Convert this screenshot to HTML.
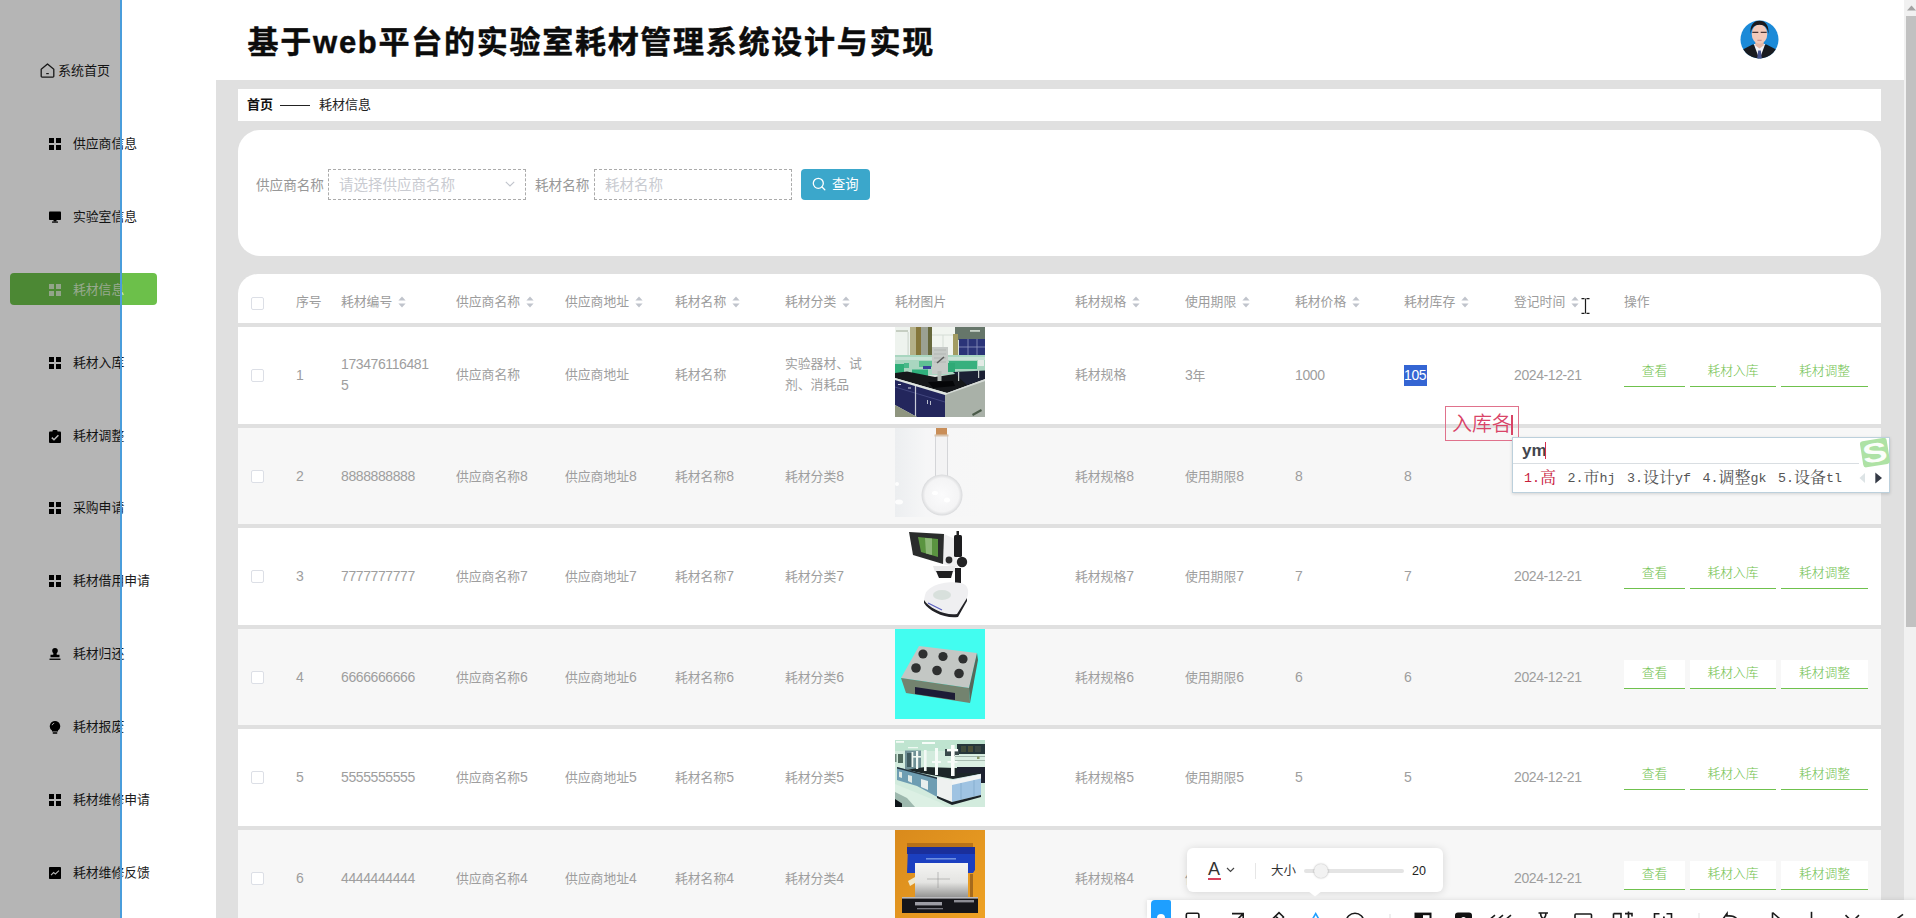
<!DOCTYPE html>
<html lang="zh-CN"><head><meta charset="utf-8"><title>基于web平台的实验室耗材管理系统设计与实现</title>
<style>
*{box-sizing:border-box;margin:0;padding:0}
html,body{width:1916px;height:918px;overflow:hidden;background:#e0e0e0;}
body{position:relative;font-family:"Liberation Sans","Noto Sans CJK SC",sans-serif;font-size:13px;color:#222;}
.abs{position:absolute}
#side{left:0;top:0;width:216px;height:918px;background:#fff}
#head{left:216px;top:0;width:1688px;height:80px;background:#fff}
#title{left:247.6px;top:18.8px;font-size:31px;font-weight:700;line-height:48px;white-space:nowrap;letter-spacing:1.73px;-webkit-text-stroke:0.45px #0c0c0c;color:#0c0c0c}
.mi{left:0;width:216px;height:32px;line-height:32px;font-size:12.8px;color:#1c1c1c;white-space:nowrap}
.mi .t{position:absolute;left:73px;top:0}
.mi svg{position:absolute;left:49px;top:10px}
#crumb{left:238px;top:89px;width:1643px;height:32px;background:#fff;line-height:32px;font-size:13px;color:#222;white-space:nowrap}
#search{left:238px;top:130px;width:1643px;height:126px;background:#fff;border-radius:22px}
#tbl{left:238px;top:274px;width:1643px;height:660px;background:#e0e0e0;border-radius:20px 20px 0 0;overflow:hidden}
.row{position:absolute;left:0;width:1643px}
.c{position:absolute;white-space:nowrap;font-size:12.8px;line-height:20px;color:#9e9e9e;font-weight:400}
.h{position:absolute;white-space:nowrap;font-size:12.8px;line-height:20px;color:#9c9c9c;top:18px;font-weight:400}
.cb{position:absolute;left:13px;width:13px;height:13px;border:1px solid #dcdfe6;border-radius:2px;background:#fff}
.btn{position:absolute;height:29px;line-height:26px;text-align:center;color:#6fc14d;font-size:12.8px;border-bottom:1px solid #6fc14d;background:#fff;font-weight:300}
.caret{position:absolute;top:22px}
.n{font-size:14px;letter-spacing:-0.4px}
#cand .l{font-size:13.33px;letter-spacing:0}
#cand .g{margin-left:11.5px}
#cand .k{position:relative;top:1.6px}
.lbl{position:absolute;font-size:13.6px;color:#989898;line-height:31px;top:40px;white-space:nowrap;font-weight:400}
.inp{position:absolute;top:39px;height:31px;border:1px dashed #ababab;line-height:31px;font-size:14.5px;color:#c9cbd1;padding-left:10px;white-space:nowrap;font-weight:400}
</style></head><body>
<div id="side" class="abs">
<div class="abs" style="left:40px;top:63px;width:16px;height:16px"><svg width="15" height="15" viewBox="0 0 15 15"><path d="M1.2 6.2 L7.5 0.9 L13.8 6.2 V13.2 a0.9 0.9 0 0 1 -0.9 0.9 H2.1 a0.9 0.9 0 0 1 -0.9 -0.9 Z" fill="none" stroke="#222" stroke-width="1.3" stroke-linejoin="round"/><path d="M6.2 10.6 h2.6" stroke="#222" stroke-width="1.2"/></svg></div>
<div class="abs" style="left:58px;top:55px;line-height:32px;font-size:13px;color:#1c1c1c;white-space:nowrap">系统首页</div>
<div class="abs mi" style="top:128px"><svg width="12" height="12" viewBox="0 0 12 12"><rect x="0" y="0" width="5" height="5" fill="#000"/><rect x="7" y="0" width="5" height="5" fill="#000"/><rect x="0" y="7" width="5" height="5" fill="#000"/><rect x="7" y="7" width="5" height="5" fill="#000"/></svg><span class="t">供应商信息</span></div>
<div class="abs mi" style="top:201px"><svg width="12" height="12" viewBox="0 0 12 12"><rect x="0" y="0.5" width="12" height="8.5" rx="0.8" fill="#000"/><rect x="4.5" y="9" width="3" height="1.5" fill="#000"/><rect x="3" y="10.5" width="6" height="1.2" fill="#000"/></svg><span class="t">实验室信息</span></div>
<div class="abs" style="left:10px;top:273px;width:147px;height:32px;background:#6cc04a;border-radius:4px"></div>
<div class="abs mi" style="top:274px;color:#d6efca"><svg width="12" height="12" viewBox="0 0 12 12"><rect x="0" y="0" width="5" height="5" fill="#cfe9c3"/><rect x="7" y="0" width="5" height="5" fill="#cfe9c3"/><rect x="0" y="7" width="5" height="5" fill="#cfe9c3"/><rect x="7" y="7" width="5" height="5" fill="#cfe9c3"/></svg><span class="t">耗材信息</span></div>
<div class="abs mi" style="top:347px"><svg width="12" height="12" viewBox="0 0 12 12"><rect x="0" y="0" width="5" height="5" fill="#000"/><rect x="7" y="0" width="5" height="5" fill="#000"/><rect x="0" y="7" width="5" height="5" fill="#000"/><rect x="7" y="7" width="5" height="5" fill="#000"/></svg><span class="t">耗材入库</span></div>
<div class="abs mi" style="top:420px"><svg width="12" height="13" viewBox="0 0 12 13"><rect x="0" y="1.5" width="12" height="11.5" rx="1" fill="#000"/><rect x="3.5" y="0" width="5" height="3" rx="1" fill="#000"/><path d="M2.8 7.6 L5 9.8 L9.4 5.2" stroke="#fff" stroke-width="1.5" fill="none"/></svg><span class="t">耗材调整</span></div>
<div class="abs mi" style="top:492px"><svg width="12" height="12" viewBox="0 0 12 12"><rect x="0" y="0" width="5" height="5" fill="#000"/><rect x="7" y="0" width="5" height="5" fill="#000"/><rect x="0" y="7" width="5" height="5" fill="#000"/><rect x="7" y="7" width="5" height="5" fill="#000"/></svg><span class="t">采购申请</span></div>
<div class="abs mi" style="top:565px"><svg width="12" height="12" viewBox="0 0 12 12"><rect x="0" y="0" width="5" height="5" fill="#000"/><rect x="7" y="0" width="5" height="5" fill="#000"/><rect x="0" y="7" width="5" height="5" fill="#000"/><rect x="7" y="7" width="5" height="5" fill="#000"/></svg><span class="t">耗材借用申请</span></div>
<div class="abs mi" style="top:638px"><svg width="12" height="12" viewBox="0 0 12 12"><circle cx="6" cy="2.8" r="2.8" fill="#000"/><path d="M4.6 4.5 h2.8 l0.4 2.3 h2.7 v2.4 h-9 v-2.4 h2.7 z" fill="#000"/><rect x="0.5" y="10.6" width="11" height="1.3" fill="#000"/></svg><span class="t">耗材归还</span></div>
<div class="abs mi" style="top:711px"><svg width="12" height="13" viewBox="0 0 12 13"><path d="M6 0 a5.3 5.3 0 0 1 3 9.6 v1 h-6 v-1 a5.3 5.3 0 0 1 3 -9.6z" fill="#000"/><rect x="3.6" y="11.3" width="4.8" height="1.4" rx="0.6" fill="#000"/><path d="M3 4.2 a3.2 3.2 0 0 1 2.2 -2" stroke="#fff" stroke-width="0.9" fill="none"/></svg><span class="t">耗材报废</span></div>
<div class="abs mi" style="top:784px"><svg width="12" height="12" viewBox="0 0 12 12"><rect x="0" y="0" width="5" height="5" fill="#000"/><rect x="7" y="0" width="5" height="5" fill="#000"/><rect x="0" y="7" width="5" height="5" fill="#000"/><rect x="7" y="7" width="5" height="5" fill="#000"/></svg><span class="t">耗材维修申请</span></div>
<div class="abs mi" style="top:857px"><svg width="12" height="12" viewBox="0 0 12 12"><rect x="0" y="0" width="12" height="12" rx="0.8" fill="#000"/><path d="M2 8.2 L4.6 5.6 L6.4 7 L10 3.6" stroke="#fff" stroke-width="1.1" fill="none"/></svg><span class="t">耗材维修反馈</span></div>
</div>
<div id="head" class="abs"></div>
<div id="title" class="abs">基于web平台的实验室耗材管理系统设计与实现</div>
<div class="abs" style="left:1740px;top:20px;width:39px;height:39px"><svg width="39" height="39" viewBox="0 0 39 39"><defs><clipPath id="av"><circle cx="19.5" cy="19.5" r="19"/></clipPath></defs><g clip-path="url(#av)"><rect width="39" height="39" fill="#1b8ad8"/><path d="M-1 39 V31.5 L12.5 24.5 H26.5 L40 31.5 V39Z" fill="#191b20"/><path d="M13.8 24 L19.5 39.5 L25.2 24Z" fill="#f3f3f7"/><path d="M18.2 30.5 h2.6 l1.2 9 h-5z" fill="#46548f"/><path d="M15.3 19 h8.4 v6.5 l-4.2 3 l-4.2 -3z" fill="#e6b7a4"/><ellipse cx="19.5" cy="14" rx="7.8" ry="9.8" fill="#f1c9ba"/><path d="M10.7 14 C8 -4 31 -4 28.3 14 C28 8 24.5 4.8 19.5 4.8 C14.5 4.8 11 8 10.7 14Z" fill="#1a1a1e"/><path d="M12.3 12.4 h6 M20.7 12.4 h6" stroke="#4a3534" stroke-width="1.3"/><path d="M17.4 20.3 h4.2" stroke="#c97f78" stroke-width="0.9"/></g></svg></div>
<div id="crumb" class="abs"><span class="abs" style="left:9px;font-weight:700;color:#111">首页</span><span class="abs" style="left:42px;top:15.5px;width:30px;height:1px;background:#222"></span><span class="abs" style="left:81px;color:#222">耗材信息</span></div>
<div id="search" class="abs">
<span class="lbl" style="left:18px">供应商名称</span>
<div class="inp" style="left:90px;width:198px">请选择供应商名称<svg class="abs" style="right:10px;top:11px" width="10" height="6" viewBox="0 0 10 6"><path d="M0.8 0.8 L5 5 L9.2 0.8" fill="none" stroke="#c0c4cc" stroke-width="1.1"/></svg></div>
<span class="lbl" style="left:297px">耗材名称</span>
<div class="inp" style="left:356px;width:198px">耗材名称</div>
<div class="abs" style="left:563px;top:39px;width:69px;height:31px;border-radius:4px;background:#3ba7cb;color:#fff;font-size:13.3px;line-height:31px;white-space:nowrap"><svg class="abs" style="left:11px;top:8px" width="14" height="14" viewBox="0 0 14 14"><circle cx="6.3" cy="6.3" r="5" fill="none" stroke="#fff" stroke-width="1.3"/><path d="M10 10 L12.8 12.8" stroke="#fff" stroke-width="1.3" stroke-linecap="round"/></svg><span class="abs" style="left:31px">查询</span></div>
</div>
<div id="tbl" class="abs">
<div class="row" style="top:0;height:49px;background:#fff">
<span class="cb" style="top:23px"></span>
<span class="h" style="left:58px">序号</span>
<span class="h" style="left:103px">耗材编号</span>
<svg class="caret" style="left:159.7px" width="8" height="12" viewBox="0 0 8 12"><path d="M4 0.6 L7.6 4.6 H0.4Z" fill="#c0c4cc"/><path d="M4 11.4 L7.6 7.4 H0.4Z" fill="#c0c4cc"/></svg>
<span class="h" style="left:218px">供应商名称</span>
<svg class="caret" style="left:287.5px" width="8" height="12" viewBox="0 0 8 12"><path d="M4 0.6 L7.6 4.6 H0.4Z" fill="#c0c4cc"/><path d="M4 11.4 L7.6 7.4 H0.4Z" fill="#c0c4cc"/></svg>
<span class="h" style="left:327px">供应商地址</span>
<svg class="caret" style="left:396.5px" width="8" height="12" viewBox="0 0 8 12"><path d="M4 0.6 L7.6 4.6 H0.4Z" fill="#c0c4cc"/><path d="M4 11.4 L7.6 7.4 H0.4Z" fill="#c0c4cc"/></svg>
<span class="h" style="left:437px">耗材名称</span>
<svg class="caret" style="left:493.7px" width="8" height="12" viewBox="0 0 8 12"><path d="M4 0.6 L7.6 4.6 H0.4Z" fill="#c0c4cc"/><path d="M4 11.4 L7.6 7.4 H0.4Z" fill="#c0c4cc"/></svg>
<span class="h" style="left:547px">耗材分类</span>
<svg class="caret" style="left:603.7px" width="8" height="12" viewBox="0 0 8 12"><path d="M4 0.6 L7.6 4.6 H0.4Z" fill="#c0c4cc"/><path d="M4 11.4 L7.6 7.4 H0.4Z" fill="#c0c4cc"/></svg>
<span class="h" style="left:657px">耗材图片</span>
<span class="h" style="left:837px">耗材规格</span>
<svg class="caret" style="left:893.7px" width="8" height="12" viewBox="0 0 8 12"><path d="M4 0.6 L7.6 4.6 H0.4Z" fill="#c0c4cc"/><path d="M4 11.4 L7.6 7.4 H0.4Z" fill="#c0c4cc"/></svg>
<span class="h" style="left:947px">使用期限</span>
<svg class="caret" style="left:1003.7px" width="8" height="12" viewBox="0 0 8 12"><path d="M4 0.6 L7.6 4.6 H0.4Z" fill="#c0c4cc"/><path d="M4 11.4 L7.6 7.4 H0.4Z" fill="#c0c4cc"/></svg>
<span class="h" style="left:1057px">耗材价格</span>
<svg class="caret" style="left:1113.7px" width="8" height="12" viewBox="0 0 8 12"><path d="M4 0.6 L7.6 4.6 H0.4Z" fill="#c0c4cc"/><path d="M4 11.4 L7.6 7.4 H0.4Z" fill="#c0c4cc"/></svg>
<span class="h" style="left:1166px">耗材库存</span>
<svg class="caret" style="left:1222.7px" width="8" height="12" viewBox="0 0 8 12"><path d="M4 0.6 L7.6 4.6 H0.4Z" fill="#c0c4cc"/><path d="M4 11.4 L7.6 7.4 H0.4Z" fill="#c0c4cc"/></svg>
<span class="h" style="left:1276px">登记时间</span>
<svg class="caret" style="left:1332.7px" width="8" height="12" viewBox="0 0 8 12"><path d="M4 0.6 L7.6 4.6 H0.4Z" fill="#c0c4cc"/><path d="M4 11.4 L7.6 7.4 H0.4Z" fill="#c0c4cc"/></svg>
<span class="h" style="left:1386px">操作</span>
</div>
<div class="row" style="top:53px;height:97px;background:#fff">
<span class="cb" style="top:42px"></span>
<span class="c" style="left:58px;top:37.7px;"><span class="n">1</span></span>
<span class="c" style="left:103px;top:26.7px;"><span class="n">173476116481</span></span><span class="c" style="left:103px;top:47.7px;"><span class="n">5</span></span>
<span class="c" style="left:218px;top:37.7px;">供应商名称</span>
<span class="c" style="left:327px;top:37.7px;">供应商地址</span>
<span class="c" style="left:437px;top:37.7px;">耗材名称</span>
<span class="c" style="left:547px;top:26.7px;">实验器材、试</span><span class="c" style="left:547px;top:47.7px;">剂、消耗品</span>
<svg class="abs" style="left:657px;top:0;filter:blur(0.45px)" width="90" height="90" viewBox="0 0 90 90">
<rect width="90" height="90" fill="#dfe8e2"/>
<rect x="0" y="0" width="15" height="30" fill="#eef3ee"/><rect x="1" y="3" width="12" height="2" fill="#c6cec2"/><rect x="12.5" y="5" width="1.2" height="24" fill="#cfd8cf"/>
<rect x="15" y="0" width="6" height="31" fill="#b4b088"/><rect x="21" y="0" width="5" height="31" fill="#85763a"/><rect x="26" y="0" width="7" height="31" fill="#9ba192"/><rect x="33" y="0" width="4" height="31" fill="#66683c"/>
<rect x="37" y="0" width="23" height="30" fill="#f1f5f0"/><rect x="37" y="7.5" width="22" height="1" fill="#d5ddd5"/><rect x="47.5" y="8" width="1" height="14" fill="#d5ddd5"/>
<rect x="60" y="0" width="30" height="13" fill="#66766a"/><rect x="75" y="3" width="10" height="1.8" fill="#c9d3c9"/>
<rect x="58" y="7" width="5" height="22" fill="#a29c62"/>
<rect x="64" y="12" width="26" height="17" fill="#2b3478"/>
<path d="M73 12v17M82 12v17M64 20h26" stroke="#8f98c0" stroke-width="0.8"/>
<rect x="0" y="28" width="90" height="20" fill="#a9d6c0"/>
<rect x="0" y="30" width="90" height="3" fill="#c9e2d6"/>
<rect x="0" y="37" width="9" height="9" fill="#2fae78"/><rect x="9" y="36" width="5" height="5" fill="#49b98a"/><rect x="17" y="42.5" width="16" height="8" fill="#2fb07c"/><rect x="54" y="34" width="28" height="8" fill="#38b07e"/><rect x="24" y="34" width="13" height="6" fill="#5fc094"/><rect x="52" y="36" width="8" height="9" fill="#2faa76"/>
<rect x="28" y="39" width="8" height="3" fill="#39409a"/>
<rect x="83" y="33" width="6" height="6" fill="#e3ebe6"/>
<path d="M0 46 L12 44.5 L40 50 L60 47 L90 44 V52 L52 66 L0 51Z" fill="#15171a"/>
<rect x="37" y="20" width="16" height="27" fill="#c6cac7"/><path d="M39 23 h12 M39 27 h12 M39 31 h12 M39 35 h12" stroke="#aab0ac" stroke-width="0.7"/><path d="M42 36 l7 -6" stroke="#5a5a5a" stroke-width="1.6"/><rect x="42.5" y="44" width="4" height="10" fill="#b4bcb6"/>
<path d="M33 55 L58 54 L60 59 L38 61Z" fill="#050608"/>
<path d="M58 45 L90 43.5 V52 L72 58Z" fill="#1b2034"/>
<rect x="63" y="45" width="1.2" height="9" fill="#c8d0cc"/><rect x="83" y="43" width="1.2" height="8" fill="#c8d0cc"/>
<path d="M0 51 L52 66 L52 68 L0 53Z" fill="#dfe4e0"/>
<path d="M52 66 L90 52 V54 L52 68Z" fill="#d5dad6"/>
<path d="M0 53 L50 68 V90 H22 L0 78Z" fill="#23265c"/>
<path d="M0 60 L50 75" stroke="#4a4e86" stroke-width="0.8"/><path d="M20.5 59 L20.5 89" stroke="#c9ccd8" stroke-width="1.2"/>
<rect x="3" y="57" width="3" height="1" fill="#d5d8e2"/><rect x="13" y="60.5" width="3" height="1" fill="#d5d8e2"/><rect x="32" y="73" width="1" height="4" fill="#b9bccb"/><rect x="35" y="74" width="1" height="4" fill="#b9bccb"/>
<path d="M50 68 L90 54 V90 H50Z" fill="#a9b1a8"/>
<path d="M0 78 L22 90 H0Z" fill="#8f957f"/>
<path d="M77 87 L86 82 L87 84 L78 89Z" fill="#4a5a48"/>
</svg>
<span class="c" style="left:837px;top:37.7px;">耗材规格</span>
<span class="c" style="left:947px;top:37.7px;"><span class="n">3</span>年</span>
<span class="c" style="left:1057px;top:37.7px;"><span class="n">1000</span></span>
<span class="abs" style="left:1166px;top:38px;width:22.5px;height:21px;background:#3465d3"></span>
<span class="c" style="left:1166px;top:37.7px;color:#fff;font-weight:400"><span class="n">105</span></span>
<span class="c" style="left:1276px;top:37.7px;"><span class="n">2024-12-21</span></span>
<span class="btn" style="left:1386px;top:31px;width:61px">查看</span>
<span class="btn" style="left:1452px;top:31px;width:86px">耗材入库</span>
<span class="btn" style="left:1543px;top:31px;width:87px">耗材调整</span>
</div>
<div class="row" style="top:154px;height:96px;background:#f7f7f7">
<span class="cb" style="top:42px"></span>
<span class="c" style="left:58px;top:37.7px;"><span class="n">2</span></span>
<span class="c" style="left:103px;top:37.7px;"><span class="n">8888888888</span></span>
<span class="c" style="left:218px;top:37.7px;">供应商名称<span class="n">8</span></span>
<span class="c" style="left:327px;top:37.7px;">供应商地址<span class="n">8</span></span>
<span class="c" style="left:437px;top:37.7px;">耗材名称<span class="n">8</span></span>
<span class="c" style="left:547px;top:37.7px;">耗材分类<span class="n">8</span></span>
<svg class="abs" style="left:657px;top:0;filter:blur(0.45px)" width="90" height="89" viewBox="0 0 90 89">
<defs><radialGradient id="fg" cx="0.5" cy="0.5" r="0.5"><stop offset="0" stop-color="#fbfbfc"/><stop offset="0.82" stop-color="#f4f4f5"/><stop offset="1" stop-color="#d9dadc"/></radialGradient>
<linearGradient id="fb" x1="0" x2="1"><stop offset="0" stop-color="#eceef0"/><stop offset="0.35" stop-color="#f6f6f7"/><stop offset="1" stop-color="#f7f7f7"/></linearGradient></defs>
<rect width="90" height="89" fill="url(#fb)"/>
<rect x="40.5" y="7" width="12" height="43" fill="#f3f3f4" stroke="#d4d5d8" stroke-width="1"/>
<circle cx="47" cy="67" r="20.5" fill="url(#fg)"/>
<rect x="41" y="0" width="11" height="7.5" fill="#c98e58"/><rect x="39.5" y="6.5" width="14" height="2" fill="#d8c4ae"/>
<ellipse cx="40" cy="65" rx="3" ry="2" fill="#fff"/><ellipse cx="52" cy="72" rx="3" ry="2.5" fill="#fff"/>
<ellipse cx="4" cy="74" rx="4" ry="2.5" fill="#fdfdfd"/><ellipse cx="2" cy="56" rx="2" ry="2" fill="#fdfdfd"/>
</svg>
<span class="c" style="left:837px;top:37.7px;">耗材规格<span class="n">8</span></span>
<span class="c" style="left:947px;top:37.7px;">使用期限<span class="n">8</span></span>
<span class="c" style="left:1057px;top:37.7px;"><span class="n">8</span></span>
<span class="c" style="left:1166px;top:37.7px;"><span class="n">8</span></span>
</div>
<div class="row" style="top:254px;height:97px;background:#fff">
<span class="cb" style="top:42px"></span>
<span class="c" style="left:58px;top:37.7px;"><span class="n">3</span></span>
<span class="c" style="left:103px;top:37.7px;"><span class="n">7777777777</span></span>
<span class="c" style="left:218px;top:37.7px;">供应商名称<span class="n">7</span></span>
<span class="c" style="left:327px;top:37.7px;">供应商地址<span class="n">7</span></span>
<span class="c" style="left:437px;top:37.7px;">耗材名称<span class="n">7</span></span>
<span class="c" style="left:547px;top:37.7px;">耗材分类<span class="n">7</span></span>
<svg class="abs" style="left:657px;top:0;filter:blur(0.45px)" width="90" height="90" viewBox="0 0 90 90">
<rect width="90" height="90" fill="#fff"/>
<path d="M49 6 L60 11 L63 40 L48 36Z" fill="#eeeeef"/>
<path d="M14 4 L49 6 L48 36 L18 27Z" fill="#2a2c2c"/>
<path d="M23 9 L43 11 L43 29 L26 24Z" fill="#5a9440"/>
<path d="M30 10 L37 10.5 L37 27 L31 25.5Z" fill="#8db878"/>
<rect x="59" y="7" width="8" height="22" rx="1.5" fill="#1d1d1f"/><rect x="61.5" y="3" width="2.5" height="5" fill="#222"/>
<circle cx="67" cy="34" r="5.2" fill="#232324"/><circle cx="54" cy="32" r="3.4" fill="#2c2c2d"/>
<path d="M38 38 L60 38 L60 44 L40 44Z" fill="#e9e9ea"/>
<path d="M41 43 L58 43 L56 50 L44 50Z" fill="#1f1f21"/>
<rect x="60" y="40" width="6" height="18" fill="#1c1c1e"/>
<path d="M30 67 C32 58 50 52 66 55 C74 57 74 64 72 70 L62 86 C50 88 34 80 29 72Z" fill="#efeff1"/>
<path d="M29 72 C34 80 50 88 62 86 L72 70 L72 73 L63 89 C50 91 34 83 29 75Z" fill="#222226"/>
<ellipse cx="47" cy="67" rx="9" ry="5" fill="#d8e0dc"/>
<path d="M33 75 L47 82" stroke="#5a5fc0" stroke-width="1.2"/>
</svg>
<span class="c" style="left:837px;top:37.7px;">耗材规格<span class="n">7</span></span>
<span class="c" style="left:947px;top:37.7px;">使用期限<span class="n">7</span></span>
<span class="c" style="left:1057px;top:37.7px;"><span class="n">7</span></span>
<span class="c" style="left:1166px;top:37.7px;"><span class="n">7</span></span>
<span class="c" style="left:1276px;top:37.7px;"><span class="n">2024-12-21</span></span>
<span class="btn" style="left:1386px;top:32px;width:61px">查看</span>
<span class="btn" style="left:1452px;top:32px;width:86px">耗材入库</span>
<span class="btn" style="left:1543px;top:32px;width:87px">耗材调整</span>
</div>
<div class="row" style="top:355px;height:96px;background:#f7f7f7">
<span class="cb" style="top:42px"></span>
<span class="c" style="left:58px;top:37.7px;"><span class="n">4</span></span>
<span class="c" style="left:103px;top:37.7px;"><span class="n">6666666666</span></span>
<span class="c" style="left:218px;top:37.7px;">供应商名称<span class="n">6</span></span>
<span class="c" style="left:327px;top:37.7px;">供应商地址<span class="n">6</span></span>
<span class="c" style="left:437px;top:37.7px;">耗材名称<span class="n">6</span></span>
<span class="c" style="left:547px;top:37.7px;">耗材分类<span class="n">6</span></span>
<svg class="abs" style="left:657px;top:0;filter:blur(0.45px)" width="90" height="90" viewBox="0 0 90 90">
<rect width="90" height="90" fill="#42fdf0"/>
<path d="M24 17 L82 24 L74 59 L6 49Z" fill="#c3c7c4"/>
<path d="M6 49 L74 59 L75 74 L11 64Z" fill="#73836f"/>
<path d="M82 24 L83 31 L75 74 L74 59Z" fill="#56685a"/>
<path d="M20 58 L60 64 L60 71 L20 65Z" fill="#1d1c36"/>
<circle cx="28" cy="25" r="4.6" fill="#2e3030"/><circle cx="48" cy="27.5" r="4.6" fill="#2e3030"/><circle cx="68" cy="30" r="4.6" fill="#2e3030"/>
<circle cx="21" cy="39" r="4.8" fill="#2e3030"/><circle cx="42" cy="41.5" r="4.8" fill="#2e3030"/><circle cx="64" cy="44.5" r="4.8" fill="#2e3030"/>
</svg>
<span class="c" style="left:837px;top:37.7px;">耗材规格<span class="n">6</span></span>
<span class="c" style="left:947px;top:37.7px;">使用期限<span class="n">6</span></span>
<span class="c" style="left:1057px;top:37.7px;"><span class="n">6</span></span>
<span class="c" style="left:1166px;top:37.7px;"><span class="n">6</span></span>
<span class="c" style="left:1276px;top:37.7px;"><span class="n">2024-12-21</span></span>
<span class="btn" style="left:1386px;top:31px;width:61px">查看</span>
<span class="btn" style="left:1452px;top:31px;width:86px">耗材入库</span>
<span class="btn" style="left:1543px;top:31px;width:87px">耗材调整</span>
</div>
<div class="row" style="top:455px;height:97px;background:#fff">
<span class="cb" style="top:42px"></span>
<span class="c" style="left:58px;top:37.7px;"><span class="n">5</span></span>
<span class="c" style="left:103px;top:37.7px;"><span class="n">5555555555</span></span>
<span class="c" style="left:218px;top:37.7px;">供应商名称<span class="n">5</span></span>
<span class="c" style="left:327px;top:37.7px;">供应商地址<span class="n">5</span></span>
<span class="c" style="left:437px;top:37.7px;">耗材名称<span class="n">5</span></span>
<span class="c" style="left:547px;top:37.7px;">耗材分类<span class="n">5</span></span>
<svg class="abs" style="left:657px;top:11px;filter:blur(0.45px)" width="90" height="67" viewBox="0 0 90 67">
<rect width="90" height="67" fill="#d2ebdd"/>
<rect x="0" y="0" width="90" height="11" fill="#bfe4d0"/>
<rect x="1" y="1" width="8" height="1.8" fill="#f4fbf6"/><rect x="27" y="2" width="13" height="2" fill="#f6fcf8"/><rect x="13" y="7" width="10" height="1.3" fill="#eef9f2"/>
<rect x="62" y="4" width="28" height="10" fill="#26363a"/><rect x="66" y="6" width="5" height="6" fill="#3e4a3a"/><rect x="73" y="6" width="5" height="6" fill="#4a4e36"/><rect x="80" y="6" width="6" height="6" fill="#3a4642"/>
<rect x="50" y="9" width="14" height="7" fill="#3a4a4c"/>
<rect x="10" y="10.5" width="16" height="19" fill="#6f9096"/><rect x="12" y="13" width="5" height="14" fill="#3f5a5e"/>
<rect x="3" y="14" width="5" height="9" fill="#4f6a5e"/><rect x="0" y="14" width="1.5" height="8" fill="#6a857a"/>
<rect x="60" y="15" width="30" height="12" fill="#dcefe4"/><rect x="60" y="16" width="30" height="1" fill="#9fb4aa"/><rect x="60" y="20" width="30" height="1" fill="#a9bdb3"/><rect x="82" y="16.5" width="2.5" height="2.5" fill="#8a9a6a"/>
<path d="M30 27 L90 29 V33 L58 39 L10 30Z" fill="#1c2628"/>
<path d="M62 27 H90 V43 H86 V33 H62Z" fill="#1e2230"/>
<path d="M2 27 L44 38 L44 58 L22 46 L2 40Z" fill="#6e9db2"/>
<path d="M2 27 L44 38 L44 39.5 L2 28.5Z" fill="#24323a"/>
<path d="M26 39 L33 41 V50 L26 47Z" fill="#e8eeee"/><path d="M13 35 L17 36 V43 L13 41Z" fill="#e1eae6"/><path d="M4 31.5 L7 32.3 V38 L4 37Z" fill="#dfe9e4"/>
<path d="M42 37 L57 40 V62 L42 56Z" fill="#eef1f0"/>
<path d="M57 40 L86 34 V55 L57 62Z" fill="#9fc3e2"/>
<path d="M57 40 L86 34 V38.5 L57 45Z" fill="#f2f4f4"/>
<path d="M66 43 V59.5 M79 40 V56" stroke="#7fa6c8" stroke-width="0.7"/>
<path d="M42 56 L57 62 L86 55 V57 L57 65 L42 58Z" fill="#1b2228"/>
<rect x="56" y="5" width="3.6" height="31" fill="#fafdfb"/><rect x="40" y="8" width="3" height="27" fill="#f6fbf8"/><rect x="29" y="10" width="2.6" height="21" fill="#f2f9f5"/><rect x="21" y="11" width="2.2" height="18" fill="#f2f9f5"/><rect x="16.5" y="12" width="1.8" height="15" fill="#eef7f2"/>
<rect x="52" y="9" width="11" height="2.4" fill="#fafdfb"/><rect x="37" y="21" width="9" height="2" fill="#f6fbf8"/><rect x="52.5" y="21" width="10" height="1.8" fill="#f6fbf8"/><rect x="18" y="16" width="8" height="1.6" fill="#eef7f2"/>
<path d="M0 44 L44 62 L52 67 H0Z" fill="#dcf0e4"/>
<path d="M0 52 L12 58 L20 67 H0Z" fill="#9db8ae"/><path d="M0 59 L7 63.5 V67 H0Z" fill="#0e1418"/>
</svg>
<span class="c" style="left:837px;top:37.7px;">耗材规格<span class="n">5</span></span>
<span class="c" style="left:947px;top:37.7px;">使用期限<span class="n">5</span></span>
<span class="c" style="left:1057px;top:37.7px;"><span class="n">5</span></span>
<span class="c" style="left:1166px;top:37.7px;"><span class="n">5</span></span>
<span class="c" style="left:1276px;top:37.7px;"><span class="n">2024-12-21</span></span>
<span class="btn" style="left:1386px;top:32px;width:61px">查看</span>
<span class="btn" style="left:1452px;top:32px;width:86px">耗材入库</span>
<span class="btn" style="left:1543px;top:32px;width:87px">耗材调整</span>
</div>
<div class="row" style="top:556px;height:100px;background:#f7f7f7">
<span class="cb" style="top:42px"></span>
<span class="c" style="left:58px;top:37.7px;"><span class="n">6</span></span>
<span class="c" style="left:103px;top:37.7px;"><span class="n">4444444444</span></span>
<span class="c" style="left:218px;top:37.7px;">供应商名称<span class="n">4</span></span>
<span class="c" style="left:327px;top:37.7px;">供应商地址<span class="n">4</span></span>
<span class="c" style="left:437px;top:37.7px;">耗材名称<span class="n">4</span></span>
<span class="c" style="left:547px;top:37.7px;">耗材分类<span class="n">4</span></span>
<svg class="abs" style="left:657px;top:0;filter:blur(0.45px)" width="90" height="90" viewBox="0 0 90 90">
<defs><linearGradient id="pg" x1="0" y1="0" x2="0" y2="1"><stop offset="0" stop-color="#f4f4f2"/><stop offset="0.55" stop-color="#e4e4e2"/><stop offset="1" stop-color="#8f8f8e"/></linearGradient>
<linearGradient id="og" x1="0" y1="0" x2="1" y2="1"><stop offset="0" stop-color="#d98a1c"/><stop offset="1" stop-color="#eea224"/></linearGradient></defs>
<rect width="90" height="90" fill="url(#og)"/>
<rect x="12" y="13" width="66" height="5" fill="#9c5c14" opacity="0.6"/>
<path d="M13 17 H80 V40 L78 43 H12Z" fill="#1b3fc0"/>
<rect x="12" y="17" width="68" height="7" fill="#1a2f9c"/>
<rect x="31" y="28" width="30" height="1.6" fill="#6f8fe0"/>
<rect x="20" y="33" width="53" height="35" fill="url(#pg)"/>
<path d="M32 49 H55 M43 42 V58" stroke="#8a8a8a" stroke-width="0.5"/>
<path d="M13 51 L20 47 V53 L15 56Z" fill="#efe6c8"/>
<rect x="75" y="44" width="3" height="24" fill="#a66a1c"/>
<rect x="7" y="67" width="76" height="16" fill="#15151a"/>
<rect x="7" y="67" width="76" height="1.6" fill="#b9b9bd"/>
<rect x="20" y="72" width="27" height="3.4" fill="#9c9ca4"/><rect x="22" y="78" width="26" height="1.3" fill="#77777f"/><rect x="59" y="70" width="20" height="2.4" fill="#8c8c94"/>
</svg>
<span class="c" style="left:837px;top:37.7px;">耗材规格<span class="n">4</span></span>
<span class="c" style="left:947px;top:37.7px;">使用期限<span class="n">4</span></span>
<span class="c" style="left:1057px;top:37.7px;"><span class="n">4</span></span>
<span class="c" style="left:1166px;top:37.7px;"><span class="n">4</span></span>
<span class="c" style="left:1276px;top:37.7px;"><span class="n">2024-12-21</span></span>
<span class="btn" style="left:1386px;top:31px;width:61px">查看</span>
<span class="btn" style="left:1452px;top:31px;width:86px">耗材入库</span>
<span class="btn" style="left:1543px;top:31px;width:87px">耗材调整</span>
</div>
</div>

<!-- scrollbar -->
<div class="abs" style="left:1904px;top:0;width:12px;height:918px;background:#f1f1f1"></div>
<div class="abs" style="left:1906px;top:16px;width:10px;height:611px;background:#c1c1c1"></div>
<svg class="abs" style="left:1907px;top:5px" width="9" height="6" viewBox="0 0 9 6"><path d="M4.5 0.5 L9 5.5 H0Z" fill="#a3a3a3"/></svg>

<!-- I-beam cursor -->
<svg class="abs" style="left:1581px;top:298px" width="9" height="16" viewBox="0 0 9 16"><path d="M0.5 0.6 H3.5 M5.5 0.6 H8.5 M0.5 15.4 H3.5 M5.5 15.4 H8.5 M4.5 0.6 V15.4" stroke="#1a1a1a" stroke-width="1.2" fill="none"/></svg>

<!-- annotation text box -->
<div class="abs" style="left:1445px;top:406px;width:74px;height:35px;border:1px solid #e0728c;"></div>
<div class="abs" style="left:1452px;top:409.3px;font-size:20px;line-height:30px;color:#d94468;white-space:nowrap;font-weight:350">入库各</div>
<div class="abs" style="left:1511px;top:414.5px;width:2px;height:20px;background:#d84465"></div>

<!-- IME popup -->
<div class="abs" style="left:1512px;top:437px;width:378px;height:56px;background:#fff;border:1px solid #bcd0dc;box-shadow:0 1px 3px rgba(0,0,0,0.15)"></div>
<div class="abs" style="left:1513px;top:463px;width:346px;height:1px;background:#d9dee2"></div>
<div class="abs" style="left:1522px;top:440px;font-size:17px;line-height:22px;color:#43464e;font-weight:700;white-space:nowrap">ym</div>
<div class="abs" style="left:1544.5px;top:442px;width:1.5px;height:17px;background:#d4304e"></div>
<div class="abs" id="cand" style="left:1524px;top:465.6px;font-size:16px;line-height:24px;color:#555;white-space:nowrap;font-family:'Liberation Mono','Noto Serif CJK SC',monospace"><span style="color:#c8203c"><span class="l">1.</span><span class="k">高</span></span><span class="g"><span class="l">2.</span><span class="k">市</span><span class="l">hj</span></span><span class="g"><span class="l">3.</span><span class="k">设计</span><span class="l">yf</span></span><span class="g"><span class="l">4.</span><span class="k">调整</span><span class="l">gk</span></span><span class="g"><span class="l">5.</span><span class="k">设备</span><span class="l">tl</span></span></div>
<svg class="abs" style="left:1858px;top:472px" width="28" height="12" viewBox="0 0 28 12"><path d="M7 1 L1.5 6 L7 11Z" fill="#dde4e6"/><path d="M17.3 0.5 L24 6 L17.3 11.5Z" fill="#353a46"/></svg>
<svg class="abs" style="left:1858px;top:438px;overflow:hidden" width="32" height="31" viewBox="0 0 32 31"><g transform="rotate(-9 16 15)"><rect x="3.5" y="1.5" width="27" height="26.5" rx="3" fill="#aee2a5"/><text x="17" y="24" text-anchor="middle" font-family="Liberation Sans, sans-serif" font-weight="700" font-size="27" fill="#fbfefa" transform="translate(17 0) scale(1.38 1) translate(-17 0)">S</text></g></svg>

<!-- text style popup -->
<div class="abs" style="left:1187px;top:848px;width:256px;height:44px;background:#fff;border-radius:6px;box-shadow:0 1px 8px rgba(0,0,0,0.14)"></div>
<svg class="abs" style="left:1308px;top:891px" width="14" height="6" viewBox="0 0 14 6"><path d="M0 0 H14 L7 5.5Z" fill="#fff"/></svg>
<div class="abs" style="left:1208px;top:858px;font-size:18px;line-height:22px;color:#333;white-space:nowrap">A</div>
<div class="abs" style="left:1208px;top:878px;width:13px;height:2px;background:#d8405c"></div>
<svg class="abs" style="left:1226px;top:867px" width="9" height="6" viewBox="0 0 9 6"><path d="M1 1 L4.5 4.5 L8 1" fill="none" stroke="#444" stroke-width="1.2"/></svg>
<div class="abs" style="left:1255px;top:863px;width:1px;height:16px;background:#e6e6e6"></div>
<div class="abs" style="left:1271px;top:861px;font-size:12.5px;line-height:20px;color:#333;white-space:nowrap">大小</div>
<div class="abs" style="left:1304px;top:869px;width:100px;height:4px;border-radius:2px;background:#e4e4e4"></div>
<div class="abs" style="left:1314px;top:864px;width:14px;height:14px;border-radius:7px;background:#f2f2f2;box-shadow:0 0 2px rgba(0,0,0,0.35)"></div>
<div class="abs" style="left:1412px;top:861px;font-size:12.5px;line-height:20px;color:#222;white-space:nowrap">20</div>

<!-- screenshot toolbar -->
<div class="abs" style="left:1147px;top:900px;width:769px;height:18px;background:#fff;box-shadow:0 0 5px rgba(0,0,0,0.12)"></div>
<div class="abs" style="left:1151px;top:900px;width:20px;height:18px;background:#1e9fff;border-radius:4px 2px 0 0"></div>
<div class="abs" style="left:1157px;top:914px;width:8px;height:8px;border-radius:4px;background:#fff"></div>
<svg class="abs" style="left:1180px;top:908px" width="736" height="10" viewBox="0 0 736 10">
<g fill="none" stroke="#1b1b1b" stroke-width="1.6">
<rect x="6.3" y="5.2" width="12.6" height="10" rx="1.5"/>
<path d="M52 5.6 H63.2 V14 M63.2 5.6 L54 15"/>
<path d="M92.5 11 L99 4.6 L103.5 9 L102 11 M95.5 8 L99 11.5"/>
<path d="M131.2 13.5 L135.7 5.6 L140.2 13.5" stroke="#1e9fff"/>
<circle cx="175" cy="14" r="8.8"/>
<path d="M322 7.2 L316 12 M330 7.2 L324 12 M338 7.2 L332 12" transform="translate(-7 0)"/>
<path d="M358.5 5 h9.5 M360.5 5 c0 3 0.5 4 2.7 6 M366 5 c0 3 -0.5 4 -2.7 6"/>
<rect x="395" y="6" width="16.5" height="10" rx="1"/>
<path d="M433.5 5.6 h7.5 v6 M433.5 5.6 v6 M445 5.6 h7 v3 M448.5 3.5 v8"/>
<path d="M474.5 11 V5.8 H479.5 M491.5 11 V5.8 H486.5"/>
<path d="M543 11 L547 5.5 L547 8 C552 7.5 556 9 557.5 12" />
<path d="M592.5 4.5 L600 11 M592.5 4.5 V11"/>
<path d="M631.5 3.8 V11"/>
<path d="M665.5 7.2 L669 10.5 M679 7.2 L675.5 10.5"/>
<path d="M717.5 10.5 L723 6.3"/>
</g>
<rect x="234.5" y="4.6" width="17" height="10" fill="#111"/><rect x="243" y="7.2" width="6.5" height="8" fill="#fff"/>
<rect x="275" y="4.6" width="17" height="10" rx="3" fill="#111"/><circle cx="283.5" cy="11.5" r="2.5" fill="#fff"/>
<rect x="483" y="8.5" width="1.8" height="1.8" fill="#1b1b1b"/>
<rect x="209.5" y="6" width="1" height="6" fill="#ddd"/><rect x="518.5" y="5" width="1" height="6" fill="#e2e2e2"/>
</svg>

<!-- left grey selection mask of screenshot tool -->
<div class="abs" style="left:0;top:0;width:120px;height:918px;background:rgba(0,0,0,0.29)"></div>
<div class="abs" style="left:120px;top:0;width:2px;height:918px;background:#4a9ddb"></div>

</body></html>
